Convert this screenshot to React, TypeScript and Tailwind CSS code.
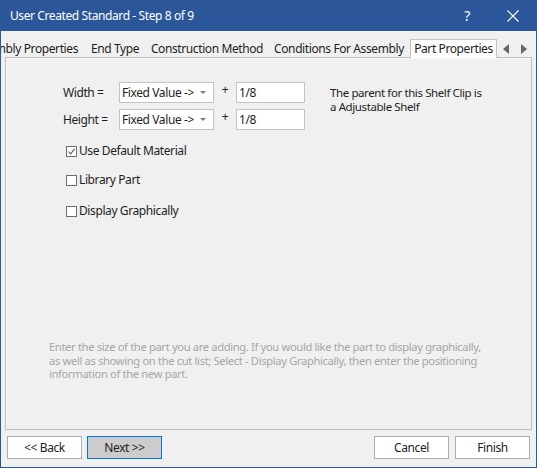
import React from "react";

const font = { fontFamily: '"Noto Sans", "Open Sans", Arial, sans-serif' };

function Checkbox({ checked, label }: { checked?: boolean; label: string }) {
  return (
    <div className="flex items-center h-[16px]">
      <div className="w-[11px] h-[11px] border border-[#6e6e6e] bg-white flex items-center justify-center">
        {checked && (
          <svg width="9" height="9" viewBox="0 0 9 9">
            <path d="M1.5 4.5 L3.6 6.8 L7.6 1.8" stroke="#5a5a5a" strokeWidth="1.1" fill="none" />
          </svg>
        )}
      </div>
      <span className="ml-[2px] text-[12px] text-[#1e1e1e]">{label}</span>
    </div>
  );
}

function Dropdown() {
  return (
    <div className="w-[95px] h-[21px] bg-white border border-[#c3c3c3] flex items-center pl-[2px] pr-[7px] justify-between">
      <span className="text-[12px] text-[#1e1e1e]">Fixed Value -&gt;</span>
      <svg width="6" height="4" viewBox="0 0 6 4">
        <path d="M0 0 L6 0 L3 3 Z" fill="#7a7a7a" />
      </svg>
    </div>
  );
}

function FieldRow({ label }: { label: string }) {
  return (
    <div className="flex items-center h-[21px]">
      <span className="w-[56px] text-[12px] text-[#1e1e1e]">{label}</span>
      <Dropdown />
      <span className="w-[22px] text-center text-[12px] text-[#1e1e1e] -mt-[5px]">+</span>
      <div className="w-[69px] h-[21px] bg-white border border-[#c3c3c3] flex items-center pl-[2px]">
        <span className="text-[12px] text-[#1e1e1e]">1/8</span>
      </div>
    </div>
  );
}

function Btn({ label, active }: { label: string; active?: boolean }) {
  return (
    <div
      className={
        "w-[75px] h-[23px] flex items-center justify-center text-[12px] text-[#1e1e1e] border " +
        (active ? "bg-[#cccccc] border-[#0078d7]" : "bg-white border-[#adadad]")
      }
    >
      {label}
    </div>
  );
}

export default function App() {
  return (
    <div
      className="w-[537px] h-[468px] bg-[#f0f0f0] flex flex-col border-x border-b border-[#2b579a] overflow-hidden tracking-[-0.4px]"
      style={font}
    >
      {/* Title bar */}
      <div className="h-[31px] bg-[#2b579a] flex items-center text-white shrink-0 -mx-px">
        <span className="ml-[10px] text-[12px] flex-1">User Created Standard - Step 8 of 9</span>
        <span className="text-[14px] w-[20px] text-center mr-[30px]">?</span>
        <svg width="12" height="12" viewBox="0 0 12 12" className="mr-[18px]">
          <path d="M0.5 0.5 L11.5 11.5 M11.5 0.5 L0.5 11.5" stroke="white" strokeWidth="1.2" />
        </svg>
      </div>

      {/* Tabs row */}
      <div className="h-[27px] flex items-end shrink-0 relative z-10 overflow-hidden">
        <div className="flex items-end h-[19px] w-full">
          <div className="w-[84px] h-[19px] flex items-center justify-end pr-[7px] overflow-hidden whitespace-nowrap text-[12px] text-[#1e1e1e] shrink-0">
            Assembly Properties
          </div>
          <div className="w-[60px] h-[19px] flex items-center justify-center text-[12px] text-[#1e1e1e] shrink-0 whitespace-nowrap">
            End Type
          </div>
          <div className="w-[124px] h-[19px] flex items-center justify-center text-[12px] text-[#1e1e1e] shrink-0 whitespace-nowrap">
            Construction Method
          </div>
          <div className="w-[140px] h-[19px] flex items-center justify-center text-[12px] text-[#1e1e1e] shrink-0 whitespace-nowrap">
            Conditions For Assembly
          </div>
          <div className="w-[87px] h-[19px] ml-px flex items-center justify-center text-[12px] text-[#1e1e1e] shrink-0 whitespace-nowrap bg-white border-t border-x border-[#c4c4c4]">
            Part Properties
          </div>
          <div className="flex items-center h-[19px] ml-[6px] gap-[12px]">
            <svg width="6" height="10" viewBox="0 0 6 10">
              <path d="M6 0 L0 5 L6 10 Z" fill="#666666" />
            </svg>
            <svg width="6" height="10" viewBox="0 0 6 10">
              <path d="M0 0 L6 5 L0 10 Z" fill="#666666" />
            </svg>
          </div>
        </div>
      </div>

      {/* Panel */}
      <div className="mx-[4px] -mt-px h-[373px] border border-[#bdbdbd] shrink-0 relative">
        <div className="h-full border-l border-t border-[#fafafa] flex flex-col">
          <div className="flex pt-[23px]">
            <div className="pl-[56px] flex flex-col gap-[6px]">
              <FieldRow label="Width =" />
              <FieldRow label="Height =" />
            </div>
            <p className="ml-[25px] mt-[4px] text-[11.5px] leading-[13.5px] text-[#1e1e1e]">
              The parent for this Shelf Clip is
              <br />
              a Adjustable Shelf
            </p>
          </div>
          <div className="pl-[59px] mt-[13px] flex flex-col gap-[13px]">
            <Checkbox checked label="Use Default Material" />
            <Checkbox label="Library Part" />
            <div className="mt-[2px]">
              <Checkbox label="Display Graphically" />
            </div>
          </div>
          <p className="pl-[42px] mt-[121px] text-[11.2px] leading-[13.5px] tracking-[-0.35px] text-[#a6a6a6] whitespace-nowrap">
            Enter the size of the part you are adding. If you would like the part to display graphically,
            <br />
            as well as showing on the cut list; Select - Display Graphically, then enter the positioning
            <br />
            information of the new part.
          </p>
        </div>
      </div>

      {/* Buttons */}
      <div className="flex mt-[6px] px-[6px]">
        <Btn label="<< Back" />
        <div className="ml-[5px]">
          <Btn label="Next >>" active />
        </div>
        <div className="flex-1" />
        <Btn label="Cancel" />
        <div className="ml-[6px]">
          <Btn label="Finish" />
        </div>
      </div>
    </div>
  );
}
